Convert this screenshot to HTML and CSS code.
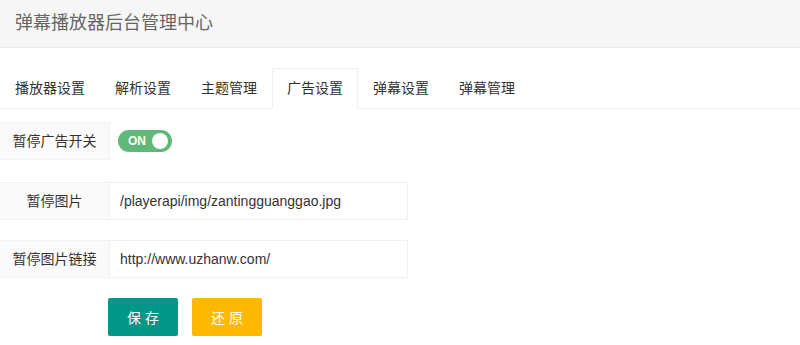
FILE: index.html
```html
<!DOCTYPE html>
<html lang="zh-CN">
<head>
  <meta charset="UTF-8" />
  <title>弹幕播放器后台管理中心</title>
  <meta name="viewport" content="width=device-width, initial-scale=1.0" />
  <link rel="stylesheet" href="styles.css">
</head>
<body>
  <header class="header">弹幕播放器后台管理中心</header>

  <div class="main">
    <ul class="tab-title">
      <li>播放器设置</li>
      <li>解析设置</li>
      <li>主题管理</li>
      <li class="this">广告设置</li>
      <li>弹幕设置</li>
      <li>弹幕管理</li>
    </ul>

    <form class="form-pane">
      <div class="form-item switch-item">
        <label class="form-label">暂停广告开关</label>
        <div class="input-block">
          <div class="switch on"><em>ON</em><i></i></div>
        </div>
      </div>

      <div class="form-item">
        <label class="form-label">暂停图片</label>
        <div class="input-block">
          <input class="input" type="text" value="/playerapi/img/zantingguanggao.jpg" />
        </div>
      </div>

      <div class="form-item">
        <label class="form-label">暂停图片链接</label>
        <div class="input-block">
          <input class="input" type="text" value="http://www.uzhanw.com/" />
        </div>
      </div>

      <div class="form-actions">
        <button type="button" class="btn">保 存</button>
        <button type="button" class="btn btn-warm">还 原</button>
      </div>
    </form>
  </div>
</body>
</html>
```

FILE: styles.css
```css
body {
  margin: 0;
  font-family: 'Liberation Sans', 'Noto Sans CJK SC', sans-serif;
  font-size: 14px;
  color: #333;
  background: #fff;
}

.header {
  height: 47px;
  line-height: 46px;
  padding-left: 15px;
  font-size: 18px;
  color: #666;
  background: #f6f6f6;
  border-bottom: 1px solid #e9e9e9;
}

.main {
  padding-top: 20px;
}

/* tabs */
.tab-title {
  display: flex;
  height: 40px;
  margin: 0;
  padding: 0;
  list-style: none;
  border-bottom: 1px solid #eee;
}

.tab-title li {
  position: relative;
  padding: 0 15px;
  line-height: 40px;
  color: #333;
  cursor: pointer;
}

.tab-title li.this::after {
  content: "";
  position: absolute;
  left: 0;
  top: 0;
  width: 100%;
  height: 41px;
  box-sizing: border-box;
  border: 1px solid #eee;
  border-bottom-color: #fff;
  border-radius: 2px 2px 0 0;
}

/* form */
.form-pane {
  padding-top: 13px;
}

.form-item {
  display: flex;
  height: 38px;
  margin-bottom: 20px;
}

.switch-item {
  margin-bottom: 22px;
}

.form-label {
  width: 110px;
  height: 38px;
  box-sizing: border-box;
  padding: 8px 0;
  line-height: 20px;
  text-align: center;
  background: #fafafa;
  border: 1px solid #f2f2f2;
  border-left: none;
}

.input-block {
  display: flex;
  align-items: center;
  margin-left: -1px;
}

.input {
  width: 299px;
  height: 38px;
  box-sizing: border-box;
  padding-left: 10px;
  font-family: inherit;
  font-size: 14px;
  color: #333;
  border: 1px solid #f0f0f0;
  outline: none;
}

.switch {
  display: flex;
  align-items: center;
  height: 22px;
  margin-left: 9px;
  padding: 0 4px 0 10px;
  border-radius: 20px;
  background: #5fb878;
  cursor: pointer;
}

.switch em {
  font-style: normal;
  font-weight: bold;
  font-size: 12px;
  color: #fff;
  margin-right: 6px;
}

.switch i {
  width: 16px;
  height: 16px;
  border-radius: 50%;
  background: #fff;
}

.form-actions {
  display: flex;
  gap: 14px;
  padding-left: 108px;
}

.btn {
  height: 38px;
  width: 70px;
  padding: 0;
  font-family: inherit;
  font-size: 14px;
  color: #fff;
  background: #009688;
  border: none;
  border-radius: 2px;
  cursor: pointer;
}

.btn-warm {
  background: #ffb800;
}
```
